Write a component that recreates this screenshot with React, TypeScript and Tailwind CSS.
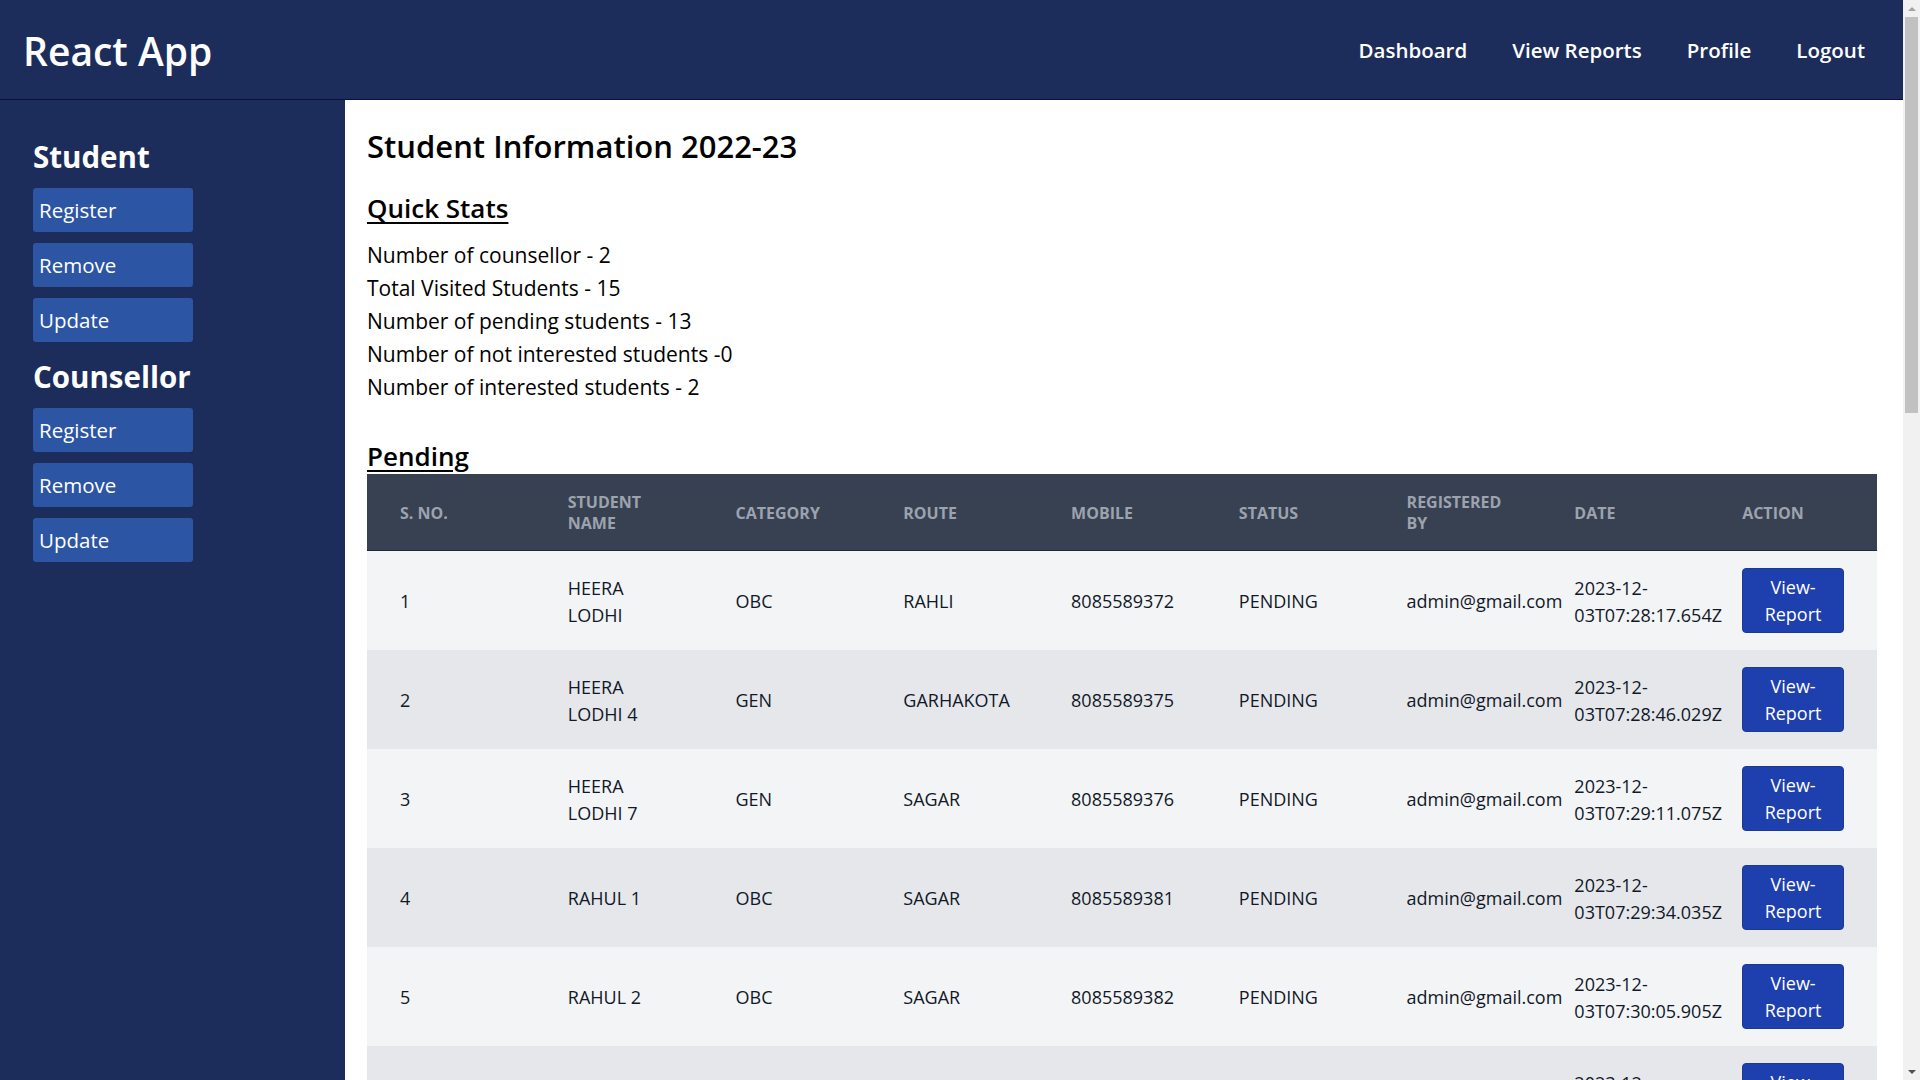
import React from "react";

type Row = {
  id: number;
  name: string;
  category: string;
  route: string;
  mobile: string;
  status: string;
  by: string;
  date: string;
};

const pending: Row[] = [
  { id: 1, name: "HEERA LODHI", category: "OBC", route: "RAHLI", mobile: "8085589372", status: "PENDING", by: "admin@gmail.com", date: "2023-12-03T07:28:17.654Z" },
  { id: 2, name: "HEERA LODHI 4", category: "GEN", route: "GARHAKOTA", mobile: "8085589375", status: "PENDING", by: "admin@gmail.com", date: "2023-12-03T07:28:46.029Z" },
  { id: 3, name: "HEERA LODHI 7", category: "GEN", route: "SAGAR", mobile: "8085589376", status: "PENDING", by: "admin@gmail.com", date: "2023-12-03T07:29:11.075Z" },
  { id: 4, name: "RAHUL 1", category: "OBC", route: "SAGAR", mobile: "8085589381", status: "PENDING", by: "admin@gmail.com", date: "2023-12-03T07:29:34.035Z" },
  { id: 5, name: "RAHUL 2", category: "OBC", route: "SAGAR", mobile: "8085589382", status: "PENDING", by: "admin@gmail.com", date: "2023-12-03T07:30:05.905Z" },
  { id: 6, name: "RAHUL 3", category: "OBC", route: "SAGAR", mobile: "8085589383", status: "PENDING", by: "admin@gmail.com", date: "2023-12-03T07:30:41.118Z" },
];

const headers = ["S. No.", "Student Name", "Category", "Route", "Mobile", "Status", "Registered By", "Date", "Action"];

function SideButton({ label }: { label: string }) {
  return (
    <button className="flex h-[44px] w-[160px] items-center rounded-[3px] bg-[#2c55a4] pl-[6px] text-left text-[20.5px] text-white">
      {label}
    </button>
  );
}

function FakeScrollbar() {
  return (
    <div className="flex w-[17px] shrink-0 flex-col bg-[#f1f1f1]">
      <div className="flex h-[17px] items-center justify-center">
        <div className="h-0 w-0 border-x-[4px] border-b-[4px] border-x-transparent border-b-[#a3a3a3]" />
      </div>
      <div className="mx-[2px] h-[396px] bg-[#c1c1c1]" />
      <div className="flex-1" />
      <div className="flex h-[17px] items-center justify-center">
        <div className="h-0 w-0 border-x-[4px] border-t-[4px] border-x-transparent border-t-[#505050]" />
      </div>
    </div>
  );
}

export default function App() {
  return (
    <div className="flex h-screen overflow-hidden bg-white font-['Open_Sans',sans-serif] text-black">
      <div className="flex min-w-0 flex-1 flex-col">
        {/* top bar */}
        <header className="flex h-[100px] shrink-0 items-center justify-between border-b border-[#0a0f4a] bg-[#1c2d5b] pt-[4px] pr-[38px] pl-[23px] text-white">
          <div className="text-[39px] font-semibold">React App</div>
          <nav className="flex gap-[45px] pb-[3px] text-[20.5px] font-semibold">
            <a>Dashboard</a>
            <a>View Reports</a>
            <a>Profile</a>
            <a>Logout</a>
          </nav>
        </header>

        <div className="flex min-h-0 flex-1">
          {/* sidebar */}
          <aside className="w-[345px] shrink-0 bg-[#1c2d5b] pt-[37px] pl-[33px] text-white">
            <h2 className="mb-[11px] text-[29.5px] leading-[40px] font-bold">Student</h2>
            <div className="flex flex-col gap-[11px]">
              <SideButton label="Register" />
              <SideButton label="Remove" />
              <SideButton label="Update" />
            </div>
            <h2 className="mt-[15px] mb-[11px] text-[29.5px] leading-[40px] font-bold">Counsellor</h2>
            <div className="flex flex-col gap-[11px]">
              <SideButton label="Register" />
              <SideButton label="Remove" />
              <SideButton label="Update" />
            </div>
          </aside>

          {/* main */}
          <main className="min-w-0 flex-1 overflow-hidden pt-[25px] pr-[26px] pl-[22px]">
            <h1 className="text-[31px] leading-[42px] font-semibold">Student Information 2022-23</h1>
            <h2 className="mt-[23px] text-[26px] leading-[36px] font-semibold underline decoration-[2px] underline-offset-[4px]">
              Quick Stats
            </h2>
            <div className="mt-[13px] text-[21px] leading-[33px]">
              <p>Number of counsellor - 2</p>
              <p>Total Visited Students - 15</p>
              <p>Number of pending students - 13</p>
              <p>Number of not interested students -0</p>
              <p>Number of interested students - 2</p>
            </div>
            <h2 className="mt-[34px] text-[26px] leading-[36px] font-semibold underline decoration-[2px] underline-offset-[4px]">
              Pending
            </h2>

            <table className="w-full table-fixed border-collapse text-left">
              <thead className="bg-[#374151] text-[16px] leading-[21px] font-bold text-[#9ca3af] uppercase">
                <tr className="border-b border-[#1f2937]">
                  {headers.map((h) => (
                    <th key={h} className="px-[33px] pt-[18px] pb-[16px] align-middle font-bold">
                      {h}
                    </th>
                  ))}
                </tr>
              </thead>
              <tbody className="text-[18px] leading-[27px] text-[#111827]">
                {pending.map((r) => (
                  <tr key={r.id} className="odd:bg-[#f3f4f6] even:bg-[#e5e7eb]">
                    <td className="px-[33px] pt-[18px] pb-[16px] align-middle">{r.id}</td>
                    <td className="px-[33px] pt-[18px] pb-[16px] align-middle">{r.name}</td>
                    <td className="px-[33px] pt-[18px] pb-[16px] align-middle">{r.category}</td>
                    <td className="px-[33px] pt-[18px] pb-[16px] align-middle">{r.route}</td>
                    <td className="px-[33px] pt-[18px] pb-[16px] align-middle">{r.mobile}</td>
                    <td className="px-[33px] pt-[18px] pb-[16px] align-middle">{r.status}</td>
                    <td className="px-[33px] pt-[18px] pb-[16px] align-middle">{r.by}</td>
                    <td className="px-[33px] pt-[18px] pb-[16px] align-middle">
                      {r.date.slice(0, 8)}
                      <wbr />
                      {r.date.slice(8)}
                    </td>
                    <td className="px-[33px] pt-[17px] pb-[17px] align-middle">
                      <button className="block w-full rounded-[4px] border border-[#1e3a8a] bg-[#1e40af] py-[4.5px] text-center text-[18px] leading-[27px] text-white">
                        View-
                        <wbr />
                        Report
                      </button>
                    </td>
                  </tr>
                ))}
              </tbody>
            </table>
          </main>
        </div>
      </div>
      <FakeScrollbar />
    </div>
  );
}
